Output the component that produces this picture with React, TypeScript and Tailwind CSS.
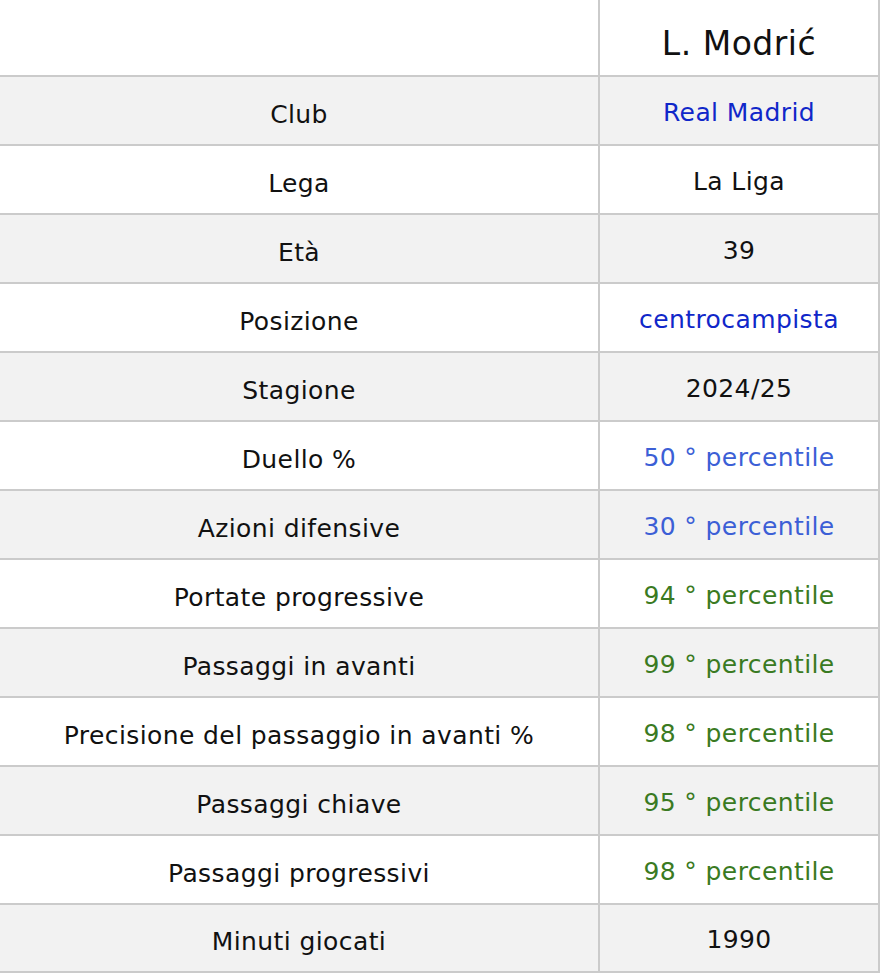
const BLUE = "text-[#1027c9]";
const PCT_BLUE = "text-[#3c5fd6]";
const GREEN = "text-[#3a7a22]";

type Row = { label: string; value: string; color?: string };

const rows: Row[] = [
  { label: "Club", value: "Real Madrid", color: BLUE },
  { label: "Lega", value: "La Liga" },
  { label: "Età", value: "39" },
  { label: "Posizione", value: "centrocampista", color: BLUE },
  { label: "Stagione", value: "2024/25" },
  { label: "Duello %", value: "50 ° percentile", color: PCT_BLUE },
  { label: "Azioni difensive", value: "30 ° percentile", color: PCT_BLUE },
  { label: "Portate progressive", value: "94 ° percentile", color: GREEN },
  { label: "Passaggi in avanti", value: "99 ° percentile", color: GREEN },
  { label: "Precisione del passaggio in avanti %", value: "98 ° percentile", color: GREEN },
  { label: "Passaggi chiave", value: "95 ° percentile", color: GREEN },
  { label: "Passaggi progressivi", value: "98 ° percentile", color: GREEN },
  { label: "Minuti giocati", value: "1990" },
];

export default function App() {
  return (
    <div
      className="w-[880px] h-[973px] overflow-hidden bg-white text-[#111]"
      style={{ fontFamily: '"DejaVu Sans", Verdana, sans-serif' }}
    >
      <div className="flex h-[77px] border-b-2 border-[#cbcbcb]">
        <div className="w-[600px] border-r-2 border-[#cbcbcb]" />
        <div className="flex-1 border-r-2 border-[#cbcbcb] flex items-center justify-center pt-3 text-[33px] tracking-[0.5px]">
          L. Modrić
        </div>
      </div>
      {rows.map((r, i) => (
        <div
          key={r.label}
          className={`flex h-[69px] last:h-[68px] border-b-2 border-[#cbcbcb] text-[25px] tracking-[0.4px] ${i % 2 === 0 ? "bg-[#f2f2f2]" : "bg-white"}`}
        >
          <div className="w-[600px] border-r-2 border-[#cbcbcb] flex items-center justify-center pt-2">
            {r.label}
          </div>
          <div className={`flex-1 border-r-2 border-[#cbcbcb] flex items-center justify-center pt-1 ${r.color ?? ""}`}>
            {r.value}
          </div>
        </div>
      ))}
    </div>
  );
}
